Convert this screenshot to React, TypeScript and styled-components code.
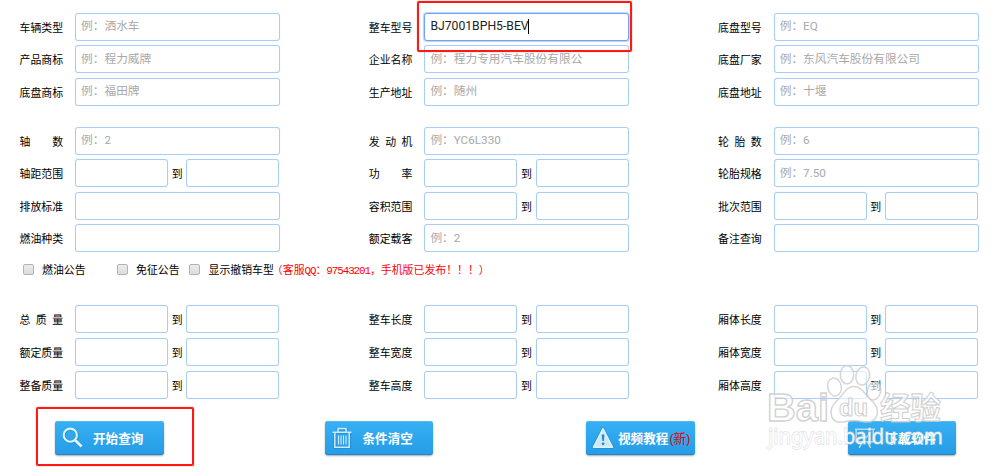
import { useState } from "react"
import styled, { createGlobalStyle } from "styled-components"

const GlobalStyle = createGlobalStyle`
  * {
    box-sizing: border-box;
  }

  body {
    margin: 0;
    background: #fff;
    color: #000;
    font-family: "Liberation Sans", "Noto Sans CJK SC", sans-serif;
    text-spacing-trim: space-all;
    overflow: hidden;
  }
`

// range: two inputs joined by 到
const basicFields = [
  [
    { label: "车辆类型", placeholder: "例：洒水车" },
    { label: "产品商标", placeholder: "例：程力威牌" },
    { label: "底盘商标", placeholder: "例：福田牌" },
  ],
  [
    { label: "整车型号", value: "BJ7001BPH5-BEV", active: true },
    { label: "企业名称", placeholder: "例：程力专用汽车股份有限公" },
    { label: "生产地址", placeholder: "例：随州" },
  ],
  [
    { label: "底盘型号", placeholder: "例：EQ" },
    { label: "底盘厂家", placeholder: "例：东风汽车股份有限公司" },
    { label: "底盘地址", placeholder: "例：十堰" },
  ],
]

const specFields = [
  [
    { label: "轴 数", placeholder: "例：2" },
    { label: "轴距范围", range: true },
    { label: "排放标准" },
    { label: "燃油种类" },
  ],
  [
    { label: "发 动 机", placeholder: "例：YC6L330" },
    { label: "功 率", range: true },
    { label: "容积范围", range: true },
    { label: "额定载客", placeholder: "例：2" },
  ],
  [
    { label: "轮 胎 数", placeholder: "例：6" },
    { label: "轮胎规格", placeholder: "例：7.50" },
    { label: "批次范围", range: true },
    { label: "备注查询" },
  ],
]

const sizeFields = [
  [
    { label: "总 质 量", range: true },
    { label: "额定质量", range: true },
    { label: "整备质量", range: true },
  ],
  [
    { label: "整车长度", range: true },
    { label: "整车宽度", range: true },
    { label: "整车高度", range: true },
  ],
  [
    { label: "厢体长度", range: true },
    { label: "厢体宽度", range: true },
    { label: "厢体高度", range: true },
  ],
]

const Field = ({ label, placeholder, value, active, range }: any) => {
  const [text, setText] = useState(value || "")

  return (
    <Row>
      <Label>{label}</Label>
      {range ? (
        <>
          <Input $half />
          <To>到</To>
          <Input $half />
        </>
      ) : (
        <InputWrap>
          <Input $active={active} placeholder={placeholder} value={text} onChange={(e) => setText(e.target.value)} />
          {active && <Caret />}
        </InputWrap>
      )}
    </Row>
  )
}

const FieldGroup = ({ columns }: any) => (
  <Group>
    {columns.map((fields, i) => (
      <Column key={i}>
        {fields.map((field) => (
          <Field key={field.label} {...field} />
        ))}
      </Column>
    ))}
  </Group>
)

const SearchIcon = () => (
  <svg width="22" height="22" viewBox="0 0 22 22" fill="none">
    <circle cx="8.7" cy="8.7" r="6.6" stroke="#1c7fbd" strokeWidth="3.2" opacity="0.5" />
    <path d="M13.6 13.8 19.6 19.8" stroke="#1c7fbd" strokeWidth="4" opacity="0.5" />
    <circle cx="8.3" cy="8.2" r="6.6" stroke="#e2f4ff" strokeWidth="2.1" />
    <path d="M13.2 13.2 19.6 19.6" stroke="#e2f4ff" strokeWidth="2.8" />
  </svg>
)

const TrashIcon = () => (
  <svg width="22" height="22" viewBox="0 0 22 22" fill="none">
    <g stroke="#1b7ab5" strokeWidth="3" opacity="0.4">
      <path d="M.5 5.8h19M6 5V2h8v3M2.8 6.5V20.5h14.8V6.5" />
    </g>
    <g stroke="#cfeaff" strokeWidth="1.5">
      <path d="M.5 5.3h19M6 5V1.6h8V5M2.8 6V20.2h14.4V6" />
      <path d="M6.5 8.5v9M9 8.5v9M11.5 8.5v9M14 8.5v9" strokeWidth="1.1" />
    </g>
  </svg>
)

const WarningIcon = () => (
  <svg width="22" height="22" viewBox="0 0 22 22">
    <path d="M10 1.6 19.6 20.2H.4Z" fill="none" stroke="#1d83c2" strokeOpacity="0.5" strokeWidth="3" strokeLinejoin="round" />
    <path d="M10 1.6 19.6 20.2H.4Z" fill="#cbe9fb" stroke="#dff2ff" strokeWidth="1.4" strokeLinejoin="round" />
    <path d="M8.8 7.4h2.6l-.5 6.6H9.3z" fill="#2788c5" />
    <circle cx="10.1" cy="16.8" r="1.4" fill="#2788c5" />
  </svg>
)

const BoardIcon = () => (
  <svg width="22" height="22" viewBox="0 0 22 22" fill="none" stroke="#b5dcf5" strokeWidth="1.5">
    <path d="M0 2.2h20M1.2 2.5v12.2h17V2.5M7.2 15 4.2 20.8M12.6 15l3 5.8" />
    <path d="M4 12.2 8 8l3 2.6L15.5 5.5" strokeWidth="1.2" />
  </svg>
)

const Watermark = () => (
  <WatermarkSvg width="184" height="94" viewBox="0 0 184 94">
    <g fill="#fff" fillOpacity="0.6" stroke="#cccccc" strokeOpacity="0.8" strokeWidth="1.5">
      <ellipse cx="69.5" cy="31" rx="6.8" ry="9" transform="rotate(-12 69.5 31)" />
      <ellipse cx="82" cy="18.8" rx="6.6" ry="9.2" />
      <ellipse cx="97.7" cy="20" rx="6.8" ry="9.2" transform="rotate(12 97.7 20)" />
      <ellipse cx="109" cy="35" rx="6.6" ry="9.2" transform="rotate(14 109 35)" />
      <path d="M89 30.5C81 30.5 79 38 73 43.5C67 49 64.5 54 66.5 60C68.5 66.5 75 67 81 65.5C87 64 91 64 97 65.5C104 67 110 65.5 112 59C113.5 53.5 111 48 105 43C99 38 97 30.5 89 30.5Z" />
    </g>
    <g fill="#fff" fillOpacity="0.65" stroke="#c9c9c9" strokeOpacity="0.85" strokeWidth="1.4" fontWeight="bold">
      <text x="2" y="65" fontSize="39" textLength="62" lengthAdjust="spacingAndGlyphs">
        Bai
      </text>
      <text x="74" y="60" fontSize="23" strokeWidth="1.1" textLength="29" lengthAdjust="spacingAndGlyphs">
        du
      </text>
      <text x="115" y="62.5" fontSize="31" strokeWidth="1.1" textLength="61" lengthAdjust="spacingAndGlyphs">
        经验
      </text>
    </g>
    <text
      x="3"
      y="88"
      fontSize="21"
      fontFamily="Noto Sans, sans-serif"
      fill="#fff"
      fillOpacity="0.85"
      stroke="#cfcfcf"
      strokeOpacity="0.6"
      strokeWidth="1.3"
      paintOrder="stroke"
      textLength="175"
      lengthAdjust="spacingAndGlyphs"
    >
      jingyan.baidu.com
    </text>
  </WatermarkSvg>
)

const App = () => {
  return (
    <Page>
      <GlobalStyle />
      <FieldGroup columns={basicFields} />
      <FieldGroup columns={specFields} />
      <Options>
        <Option $width={94}>
          <Checkbox />
          燃油公告
        </Option>
        <Option $width={72.5}>
          <Checkbox />
          免征公告
        </Option>
        <Option>
          <Checkbox />
          显示撤销车型
        </Option>
        <Notice>
          （客服<Narrow>QQ</Narrow>：<Narrow>97543201</Narrow>，手机版已发布！！！）
        </Notice>
      </Options>
      <FieldGroup columns={sizeFields} />
      <Buttons>
        <Button>
          <SearchIcon />
          <ButtonText>开始查询</ButtonText>
        </Button>
        <Button>
          <TrashIcon />
          <ButtonText>条件清空</ButtonText>
        </Button>
        <Button $tight>
          <WarningIcon />
          <ButtonText>视频教程</ButtonText>
          <New>(新)</New>
        </Button>
        <Button>
          <BoardIcon />
          <ButtonText>下载软件</ButtonText>
        </Button>
      </Buttons>
      <Highlight $left={417} $top={1} $width={215} $height={51} />
      <Highlight $left={36} $top={407} $width={158} $height={59} />
      <Watermark />
    </Page>
  )
}

const Page = styled.div`
  position: relative;
  width: 1000px;
  height: 472px;
  padding: 12.6px 0 0 19.5px;
  overflow: hidden;
`

const Group = styled.div`
  display: grid;
  grid-template-columns: repeat(3, 349.3px);
  margin-bottom: 16.3px;
`

const Column = styled.div`
  display: flex;
  flex-direction: column;
`

const Row = styled.div`
  display: flex;
  align-items: flex-start;
  height: 32.6px;
`

const Label = styled.label`
  width: 43.6px;
  margin-right: 12px;
  font-size: 10.9px;
  line-height: 31px;
  white-space: nowrap;
  text-align-last: justify;
`

const InputWrap = styled.div`
  position: relative;
  height: 28px;
`

const Input = styled.input<{ $half?: boolean; $active?: boolean }>`
  display: block;
  width: ${({ $half }) => ($half ? "93px" : "205px")};
  height: 28px;
  padding: 0 5px 1px;
  border: 1px solid ${({ $active }) => ($active ? "#6ba6f5" : "#a9cdf5")};
  border-radius: 3px;
  box-shadow: ${({ $active }) => ($active ? "0 0 1px 1px #b4d2fb" : "0 0 1px #c5dffa")};
  outline: none;
  background: #fff;
  color: #222;
  font-family: Roboto, "Noto Sans CJK SC", sans-serif;
  font-size: ${({ $active }) => ($active ? "12.2px" : "11.7px")};

  &::placeholder {
    color: #a9a9a9;
    opacity: 1;
  }
`

const Caret = styled.i`
  position: absolute;
  left: 103.5px;
  top: 6px;
  width: 1px;
  height: 15px;
  background: #000;
`

const To = styled.span`
  width: 18.2px;
  font-size: 10.9px;
  line-height: 31px;
  text-align: center;
`

const Options = styled.div`
  display: flex;
  align-items: center;
  height: 16px;
  margin: -12px 0 28px 3px;
  font-size: 10.9px;
  white-space: nowrap;
`

const Option = styled.label<{ $width?: number }>`
  display: flex;
  align-items: center;
  width: ${({ $width }) => ($width ? `${$width}px` : "auto")};
`

const Checkbox = styled.input.attrs({ type: "checkbox" })`
  appearance: none;
  width: 11px;
  height: 11px;
  margin: 0 8.5px 0 0;
  border: 1px solid #b3b3b3;
  border-radius: 2px;
  background: linear-gradient(#ececec, #dcdcdc);
`

const Notice = styled.span`
  color: #f00;
  margin-left: -2px;
`

const Narrow = styled.span`
  font-family: "Liberation Mono", monospace;
  letter-spacing: -0.1em;
`

const Buttons = styled.div`
  display: flex;
  gap: 153px;
  padding: 1.4px 0 0 35.5px;
`

const Button = styled.button<{ $tight?: boolean }>`
  display: flex;
  align-items: center;
  width: 108.5px;
  height: 34px;
  padding: 0 0 0 7px;
  gap: ${({ $tight }) => ($tight ? "3px" : "9px")};
  border: 0;
  border-radius: 3px;
  background: linear-gradient(#37b0f3, #259ce6);
  box-shadow: inset 0 1px #54b7ee, inset 0 -1px #1f86c9, 0 1px 2px rgba(0, 0, 0, 0.35);
  color: #fff;
  font-family: inherit;
  white-space: nowrap;

  &:nth-child(2) {
    margin-left: 8px;
  }
`

const ButtonText = styled.span`
  font-size: 12.6px;
  font-weight: bold;
`

const New = styled.span`
  margin-left: -2px;
  color: #e60012;
  font-size: 12.6px;
`

// red marker drawn over the form
const Highlight = styled.div<{ $left: number; $top: number; $width: number; $height: number }>`
  position: absolute;
  left: ${({ $left }) => $left}px;
  top: ${({ $top }) => $top}px;
  width: ${({ $width }) => $width}px;
  height: ${({ $height }) => $height}px;
  border: 2px solid #fb1a14;
  border-radius: 2px;
  box-shadow: 0 0 1px #fb1a14;
  pointer-events: none;
`

const WatermarkSvg = styled.svg`
  position: absolute;
  left: 765px;
  top: 356px;
  pointer-events: none;
`

export default App
